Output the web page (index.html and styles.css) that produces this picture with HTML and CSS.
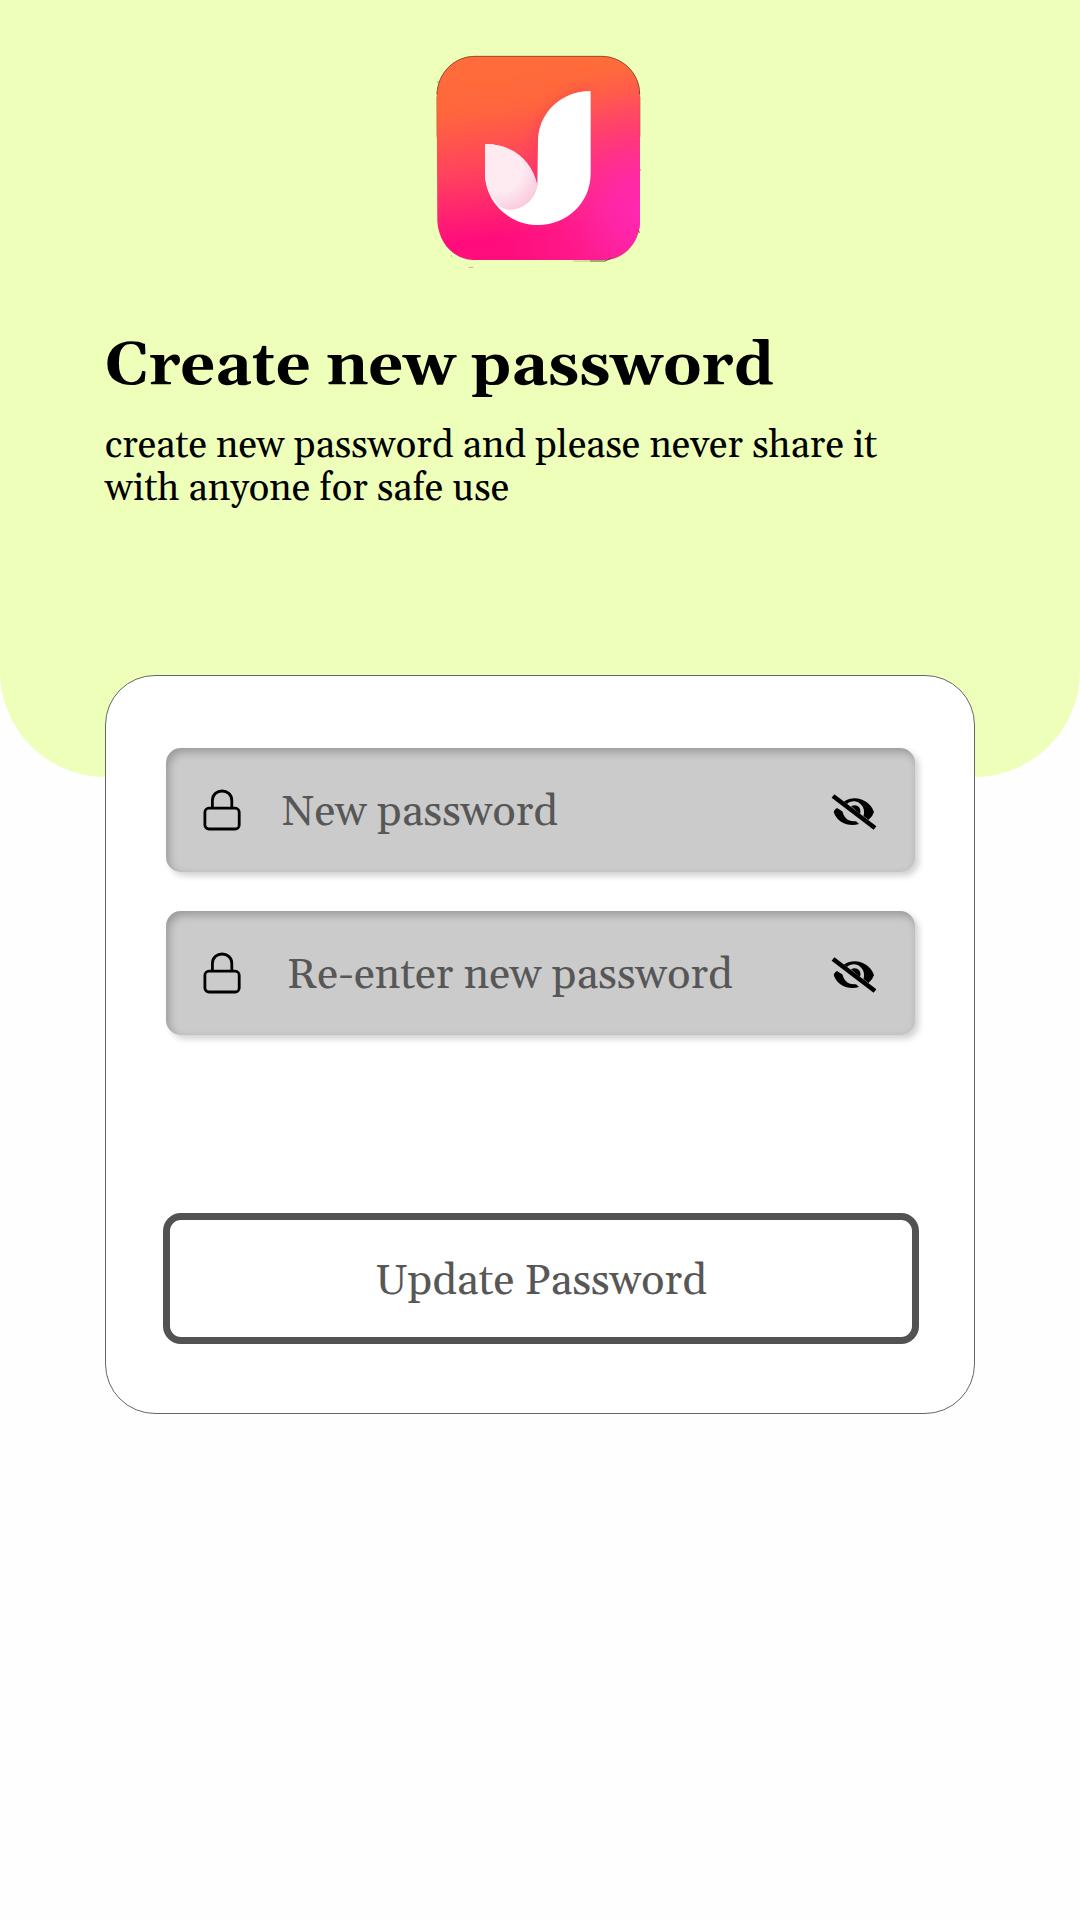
FILE: index.html
```html
<!DOCTYPE html>
<html lang="en">
<head>
<meta charset="utf-8">
<title>Create new password</title>
<link rel="stylesheet" href="styles.css">
</head>
<body>
<main class="page">
  <header class="hero">
    <svg class="logo" viewBox="0 0 720 720" aria-hidden="true">
      <defs>
        <linearGradient id="bg" x1="0.42" y1="0.08" x2="0.54" y2="1">
          <stop offset="0" stop-color="#ff6b3a"/>
          <stop offset=".18" stop-color="#ff653e"/>
          <stop offset=".5" stop-color="#ff405f"/>
          <stop offset=".85" stop-color="#ff0c7c"/>
          <stop offset="1" stop-color="#ff0c7e"/>
        </linearGradient>
        <radialGradient id="glow" gradientUnits="userSpaceOnUse" cx="670" cy="510" r="430">
          <stop offset="0" stop-color="#ff29b3"/>
          <stop offset=".25" stop-color="#ff29ad" stop-opacity=".82"/>
          <stop offset=".6" stop-color="#ff2898" stop-opacity=".4"/>
          <stop offset="1" stop-color="#ff2890" stop-opacity="0"/>
        </radialGradient>
        <radialGradient id="leaf" gradientUnits="userSpaceOnUse" cx="235" cy="385" r="145">
          <stop offset=".5" stop-color="#feeaf1"/>
          <stop offset="1" stop-color="#f9c5dc"/>
        </radialGradient>
        <filter id="soft" x="-30%" y="-30%" width="160%" height="160%"><feGaussianBlur stdDeviation="15"/></filter>
      </defs>
      <path d="M165 48H545C606 48 660 98 660 163V548C657 610 610 658 555 660H160C100 657 57 610 52 545L50 163C52 98 103 48 165 48Z" fill="url(#bg)"/>
      <path d="M165 48H545C606 48 660 98 660 163V548C657 610 610 658 555 660H160C100 657 57 610 52 545L50 163C52 98 103 48 165 48Z" fill="url(#glow)"/>
      <path d="M512 153C420 153 354 222 354 305V430" fill="none" stroke="#e8304f" stroke-opacity=".35" stroke-width="20" filter="url(#soft)"/>
      <path d="M51 163C53 99 103 49 165 49H545C606 49 659 99 659 163" fill="none" stroke="#7d4a2b" stroke-width="2.5"/>
      <path d="M50 170V290M661 170V290" fill="none" stroke="#7d4a2b" stroke-opacity=".5" stroke-width="2"/>
      <path d="M512 153V400C512 490 440 555 355 555C265 555 195 485 195 400V312C280 312 337 365 352 437L354 305C354 222 420 153 512 153Z" fill="#fff"/>
      <path d="M195 312C280 312 337 365 352 437C345 481 307 511 263 509L248 505C215 480 195 444 195 400Z" fill="url(#leaf)"/>
      <path d="M510 663H555L574 654M654 570L659 578M94 648H96M52 126H55M658 154V160M661 390H663" fill="none" stroke="#5d4f37" stroke-width="3"/>
      <path d="M460 663H510M146 682H160" fill="none" stroke="#5d4f37" stroke-opacity=".45" stroke-width="2.5"/>
    </svg>
    <h1 class="title">Create new password</h1>
    <p class="subtitle">create new password and please never share it<br>with anyone for safe use</p>
  </header>

  <form class="card">
    <label class="field">
      <svg class="lock" viewBox="0 0 38 42" fill="none" stroke="#000" stroke-width="2.8"><rect x="1.9" y="19.2" width="34.3" height="20.8" rx="4"/><path d="M9.4 19V11.5C9.4-1.2 28.8-1.2 28.8 11.5V19"/></svg>
      <span class="label">New password</span>
      <svg class="eye" viewBox="0 0 48 39"><path d="M14 8.5C25 1 40 7 44 19Q43 23 38.5 27L33.5 23C37 11 24 4 17 11Z"/><path d="M21 13.3C27 10 32 15 30 21Z"/><path d="M7 15Q3 17.5 4 20C8 30 19 34 29 31L26 28.2C17 29 14 24 12.500 18.500Z"/><path d="M3 3L45 35" stroke="#000" stroke-width="4.5"/></svg>
    </label>
    <label class="field">
      <svg class="lock" viewBox="0 0 38 42" fill="none" stroke="#000" stroke-width="2.8"><rect x="1.9" y="19.2" width="34.3" height="20.8" rx="4"/><path d="M9.4 19V11.5C9.4-1.2 28.8-1.2 28.8 11.5V19"/></svg>
      <span class="label label-repeat">Re-enter new password</span>
      <svg class="eye" viewBox="0 0 48 39"><path d="M14 8.5C25 1 40 7 44 19Q43 23 38.5 27L33.5 23C37 11 24 4 17 11Z"/><path d="M21 13.3C27 10 32 15 30 21Z"/><path d="M7 15Q3 17.5 4 20C8 30 19 34 29 31L26 28.2C17 29 14 24 12.500 18.500Z"/><path d="M3 3L45 35" stroke="#000" stroke-width="4.5"/></svg>
    </label>
    <button class="submit" type="button">Update Password</button>
  </form>
</main>
</body>
</html>
```
FILE: styles.css
```css
* { box-sizing: border-box; }

body {
  margin: 0;
  background: #fefefe;
  font-family: Georgia, Gelasio, "Liberation Serif", serif;
  color: #000;
}

.page {
  min-height: 1920px;
  display: flex;
  flex-direction: column;
  align-items: center;
}

.hero {
  width: 100%;
  height: 777px;
  padding: 40px 105px 0;
  background: #edffb8;
  border-radius: 0 0 106px 106px;
}

.logo {
  display: block;
  width: 240px;
  height: 240px;
  margin-left: 315px;
}

.title {
  margin: 51px 0 0;
  font-size: 61px;
  line-height: 70px;
  white-space: nowrap;
}

.subtitle {
  margin: 24px 0 0;
  font-size: 38px;
  line-height: 43px;
  white-space: nowrap;
}

.card {
  width: 870px;
  height: 739px;
  margin-top: -102px;
  padding: 72px 54px 0 57px;
  display: flex;
  flex-direction: column;
  background: #fff;
  border: 1px solid #666;
  border-radius: 50px;
}

.field {
  width: 749px;
  height: 124px;
  margin: 0 0 39px 2.5px;
  padding: 0 37px;
  display: flex;
  align-items: center;
  background: #cbcbcb;
  border-radius: 15px;
  box-shadow: 4px 4px 6px rgba(0, 0, 0, .18), inset 3px 4px 8px rgba(0, 0, 0, .25);
}

.lock {
  width: 38px;
  height: 42px;
  margin-top: -1px;
}

.label {
  margin-left: 41px;
  padding-top: 5px;
  font-size: 43px;
  line-height: 50px;
  color: #575757;
  white-space: nowrap;
}

.label-repeat { margin-left: 46.5px; }

.eye {
  width: 48px;
  height: 39px;
  margin: 4px 0 0 auto;
}

.submit {
  width: 756px;
  height: 131px;
  margin-top: 139px;
  padding: 6px 0 0;
  background: #fff;
  border: 7px solid #525252;
  border-radius: 18px;
  font: inherit;
  font-size: 43px;
  line-height: 50px;
  color: #575757;
}
```
